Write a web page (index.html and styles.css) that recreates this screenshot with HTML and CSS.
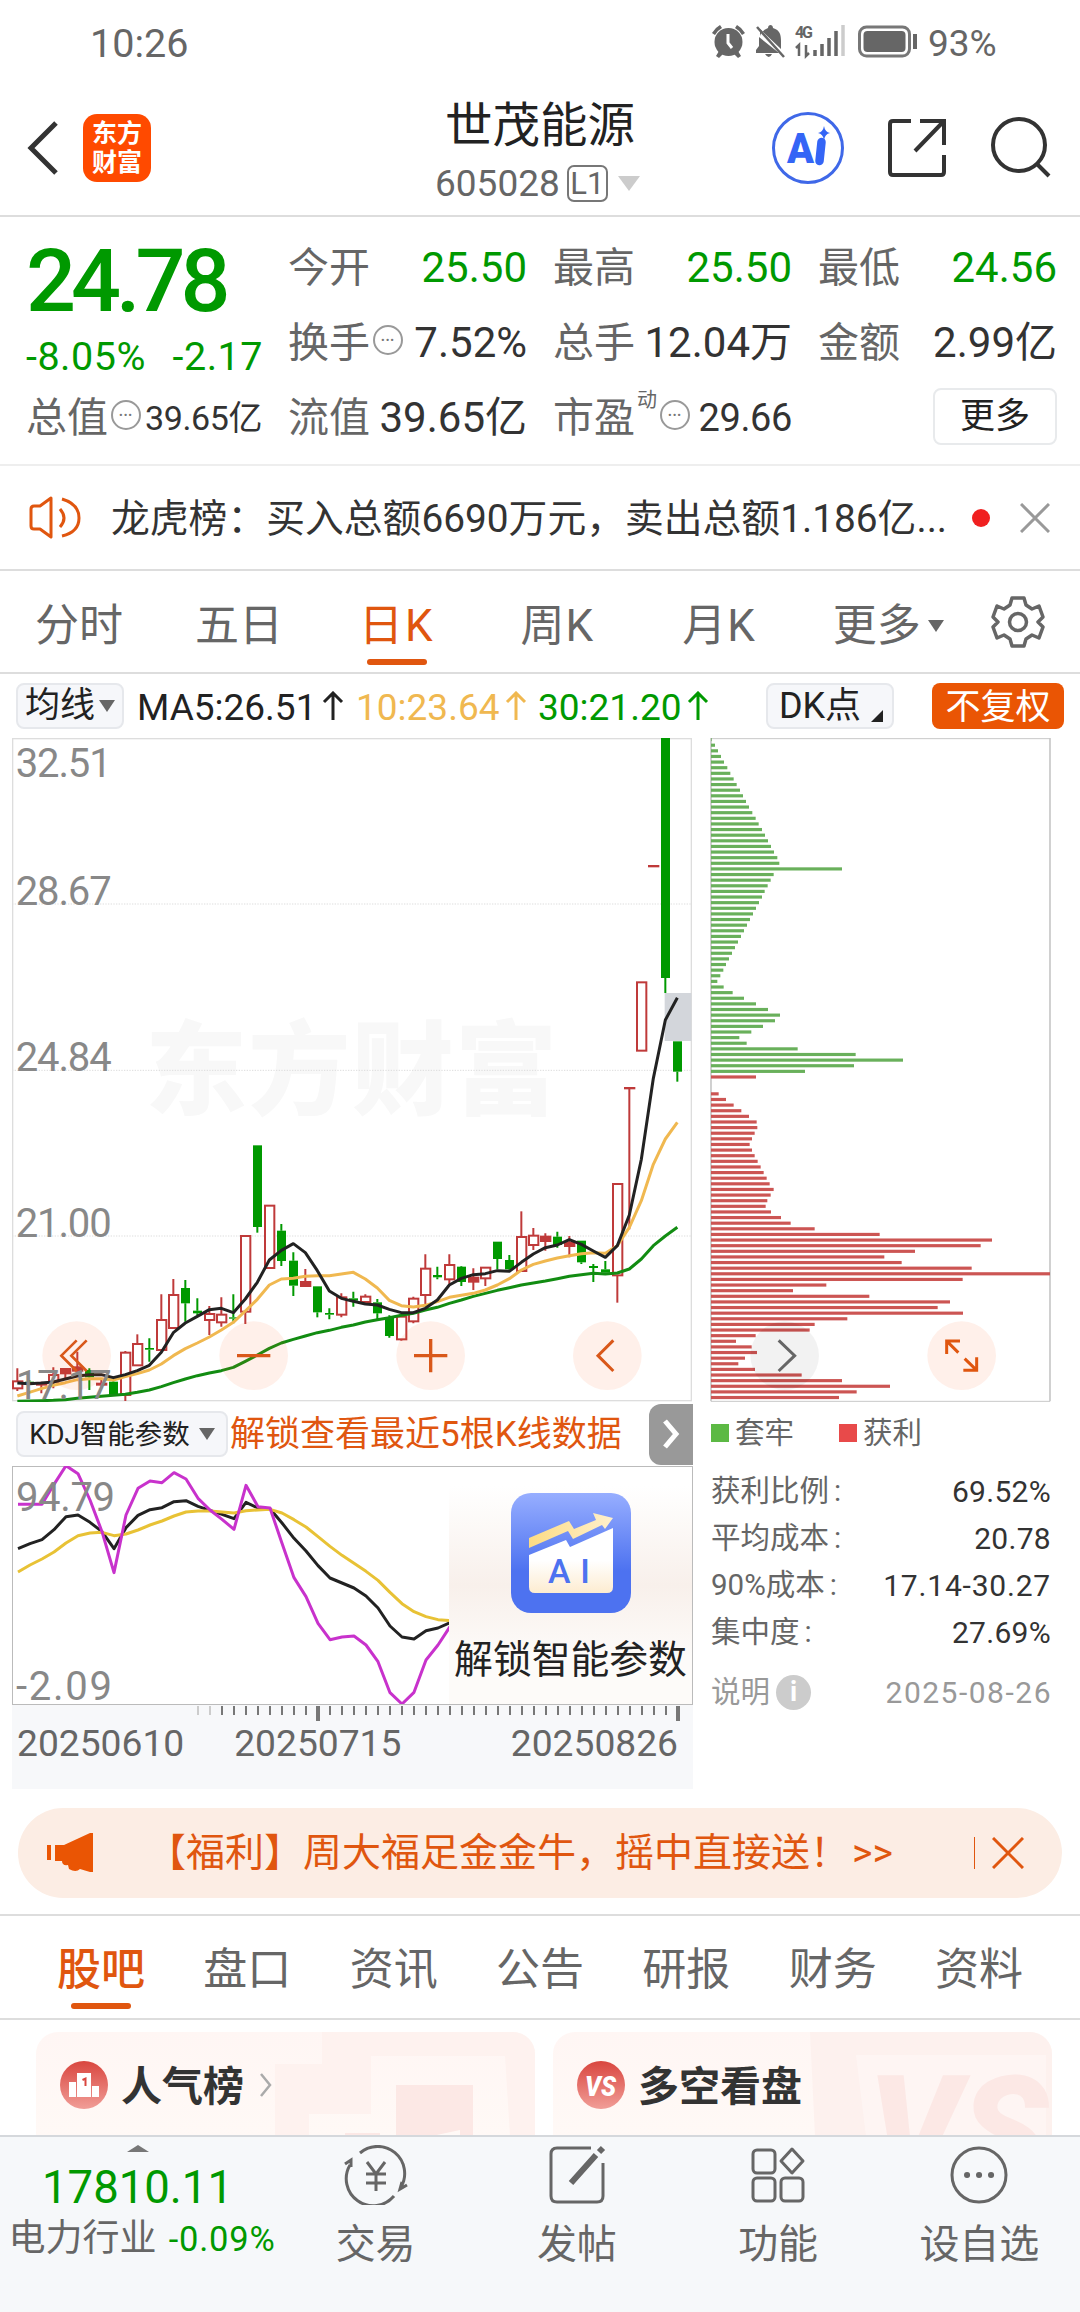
FILE: index.html
```html
<!DOCTYPE html>
<html lang="zh-CN">
<head>
    <meta charset="UTF-8">
    <meta name="viewport" content="width=device-width, initial-scale=1.0">
    <title>世茂能源 605028</title>
    <link rel="stylesheet" href="styles.css">
</head>
<body>
    <div class="status">
        <span class="clock">10:26</span>
        <svg class="status-icons" width="212" height="40" viewBox="708 20 212 40">
            <g fill="#666">
                <circle cx="728.5" cy="42" r="14"/>
                <path d="M712 33a20 20 0 0 1 8-8l2 3a18 18 0 0 0-7 7zM745 33a20 20 0 0 0-8-8l-2 3a18 18 0 0 1 7 7z"/>
                <path d="M719 51l4 3-4 4-3-2zM738 51l-4 3 4 4 3-2z"/>
                <path d="M760 36q2-6 8-8c0-4 5-4 5 0 7 2 8 7 8 13v8l-21-20zM759 37l20 16h-23v-3l3-4zM765 54h7q-3 6-7 0z"/>
            </g>
            <path d="M728 34v9l4 5" fill="none" stroke="#fff" stroke-width="3"/>
            <path d="M757 27l27 30" stroke="#666" stroke-width="2.5"/>
            <text class="net" x="795" y="38" textLength="18">4G</text>
            <path d="M799 56V45l-3 3M806 45v11l3-3" fill="none" stroke="#666" stroke-width="2.5"/>
            <path d="M815 56v-6M822 56V44M829 56V38M836 56V31" stroke="#666" stroke-width="3.5"/>
            <path d="M843 56V25" stroke="#ccc" stroke-width="3.5"/>
            <rect x="859.5" y="27" width="50" height="29" rx="7" fill="none" stroke="#777" stroke-width="3"/>
            <rect x="863.5" y="31" width="42" height="21" rx="4" fill="#666"/>
            <path d="M915 34v15" stroke="#666" stroke-width="4"/>
        </svg>
        <span class="percent">93%</span>
    </div>

    <div class="header">
        <svg class="back" width="32" height="56" viewBox="0 0 32 56"><path d="M29 3L4 28l25 25" fill="none" stroke="#333" stroke-width="5"/></svg>
        <div class="logo"><span>东方</span><span>财富</span></div>
        <div class="title">
            <h1>世茂能源</h1>
            <div class="code"><span>605028</span><span class="level">L1</span><i class="down"></i></div>
        </div>
        <svg class="ai-badge" width="74" height="74" viewBox="0 0 74 74">
            <circle cx="37" cy="37" r="34.5" fill="none" stroke="#3f68e8" stroke-width="3"/>
            <text x="16" y="52" textLength="27" lengthAdjust="spacingAndGlyphs">A</text>
            <path d="M50.500 31l-2 19" stroke="#3465f6" stroke-width="8.500" stroke-linecap="round"/>
            <path d="M53 15q1 6 6 7-5 1-6 7-1-6-6-7 5-1 6-7z" fill="#3465f6"/>
        </svg>
        <svg class="share" width="62" height="62" viewBox="0 0 62 62">
            <path d="M25 4H7q-3 0-3 3v48q0 3 3 3h48q3 0 3-3V38M34 4h24v24M58 4L29 34" fill="none" stroke="#333" stroke-width="4"/>
        </svg>
        <svg class="search" width="62" height="62" viewBox="0 0 62 62">
            <circle cx="30" cy="28" r="26" fill="none" stroke="#333" stroke-width="4"/>
            <path d="M48 47l12 12" stroke="#333" stroke-width="4"/>
        </svg>
    </div>

    <div class="quote">
        <div class="col first">
            <div class="price">24.78</div>
            <div class="change"><span>-8.05%</span><span>-2.17</span></div>
            <div class="item small"><label>总值</label><i class="tip">•••</i><b>39.65亿</b></div>
        </div>
        <div class="col">
            <div class="item green"><label>今开</label><b>25.50</b></div>
            <div class="item"><label>换手</label><i class="tip">•••</i><b>7.52%</b></div>
            <div class="item"><label>流值</label><b>39.65亿</b></div>
        </div>
        <div class="col">
            <div class="item green"><label>最高</label><b>25.50</b></div>
            <div class="item"><label>总手</label><b>12.04万</b></div>
            <div class="item pe"><label>市盈</label><sup>动</sup><i class="tip">•••</i><b>29.66</b></div>
        </div>
        <div class="col">
            <div class="item green"><label>最低</label><b>24.56</b></div>
            <div class="item"><label>金额</label><b>2.99亿</b></div>
            <button class="more">更多</button>
        </div>
    </div>

    <div class="notice">
        <svg width="52" height="46" viewBox="0 0 52 46" fill="none" stroke="#e0560f" stroke-width="3">
            <path d="M22 3L11 11H5q-3 0-3 3v17q0 3 3 3h6l11 8zM31 14q8 9 0 18M33 4q17 5 17 19T33 41" stroke-linejoin="round"/>
        </svg>
        <p>龙虎榜：买入总额6690万元，卖出总额1.186亿...</p>
        <i class="dot"></i>
        <svg width="30" height="30" viewBox="0 0 30 30"><path d="M1 1l28 28M29 1L1 29" stroke="#999" stroke-width="3"/></svg>
    </div>

    <div class="periods">
        <span>分时</span>
        <span>五日</span>
        <span class="on">日K</span>
        <span>周K</span>
        <span>月K</span>
        <span class="has-more">更多<i></i></span>
        <svg width="54" height="54" viewBox="-27 -27 54 54" fill="none" stroke="#666" stroke-width="3.500">
            <path d="M-6 -24H6L8 -17L14 -13L21 -16L25 -5L20 0L25 5L21 16L14 13L8 17L6 24H-6L-8 17L-14 13L-21 16L-25 5L-20 0L-25 -5L-21 -16L-14 -13L-8 -17Z" stroke-linejoin="round"/>
            <circle r="8.500"/>
        </svg>
    </div>

    <div class="ma-bar">
        <button class="pill avg">均线<i></i></button>
        <span class="ma5">MA5:26.51</span><svg class="up" viewBox="0 0 22 30"><path d="M11 29V2M2 11l9-9 9 9"/></svg>
        <span class="ma10">10:23.64</span><svg class="up c10" viewBox="0 0 22 30"><path d="M11 29V2M2 11l9-9 9 9"/></svg>
        <span class="ma30">30:21.20</span><svg class="up c30" viewBox="0 0 22 30"><path d="M11 29V2M2 11l9-9 9 9"/></svg>
        <button class="pill dk">DK点<i></i></button>
        <button class="adjust">不复权</button>
    </div>

    <div class="charts">
        <div class="left">
            <svg id="kline" width="680" height="664" viewBox="0 0 2040 1992"></svg>
            <div class="kdj-bar">
                <button class="pill kdj">KDJ智能参数<i></i></button>
                <span>解锁查看最近5根K线数据</span>
                <div class="next"><svg width="18" height="30" viewBox="0 0 18 30"><path d="M3 2l11 13L3 28" fill="none" stroke="#fff" stroke-width="5"/></svg></div>
            </div>
            <div class="kdj-panel">
                <svg id="kdj" width="437" height="238" viewBox="12 1466 437 238"></svg>
                <div class="unlock">
                    <svg width="120" height="120" viewBox="0 0 120 120">
                        <defs>
                            <linearGradient id="blue" x2="0" y2="1"><stop offset="0" stop-color="#97aeff"/><stop offset=".65" stop-color="#4d72f0"/></linearGradient>
                            <linearGradient id="gold" x2="1" y2="0"><stop offset="0" stop-color="#fddc84"/><stop offset="1" stop-color="#fff0cc"/></linearGradient>
                            <linearGradient id="cream" x2="0" y2="1"><stop offset=".5" stop-color="#fff"/><stop offset="1" stop-color="#fdecd0"/></linearGradient>
                        </defs>
                        <rect width="120" height="120" rx="20" fill="url(#blue)"/>
                        <path d="M18 62l37-15 4 7 43-19v59q0 6-6 6H24q-6 0-6-6z" fill="url(#cream)"/>
                        <path d="M18 45l40-17 5 8 22-9-3-7 20 5-8 11-3-4-29 14-5-8-39 17z" fill="url(#gold)"/>
                        <text x="37" y="90" textLength="42">AI</text>
                    </svg>
                    <p>解锁智能参数</p>
                </div>
            </div>
            <div class="axis">
                <svg id="ticks" width="680" height="16" viewBox="12 0 680 16"></svg>
                <div class="dates"><span>20250610</span><span>20250715</span><span>20250826</span></div>
            </div>
        </div>
        <div class="right">
            <svg id="chips" width="342" height="664" viewBox="0 0 1026 1992"></svg>
            <div class="legend"><i class="g"></i><span>套牢</span><i class="r"></i><span>获利</span></div>
            <div class="stat"><span>获利比例<u>:</u></span><b>69.52%</b></div>
            <div class="stat"><span>平均成本<u>:</u></span><b>20.78</b></div>
            <div class="stat"><span>90%成本<u>:</u></span><b class="range">17.14-30.27</b></div>
            <div class="stat"><span>集中度<u>:</u></span><b>27.69%</b></div>
            <div class="stat note"><span>说明</span><i>i</i><b>2025-08-26</b></div>
        </div>
    </div>

    <div class="promo">
        <svg width="46" height="40" viewBox="0 0 46 40" fill="#ea5504"><path d="M0 12h4v15H0zM8 12h9L43 0h3v39h-3l-10-3q-4 4-11 0l-1-4q-6 1-6-4H8z"/></svg>
        <p>【福利】周大福足金金牛，摇中直接送！<em>&gt;&gt;</em></p>
        <svg class="close" width="32" height="32" viewBox="0 0 32 32"><path d="M1 1l30 30M31 1L1 31" stroke="#e0560f" stroke-width="3"/></svg>
    </div>

    <div class="tabs">
        <span class="on">股吧</span>
        <span>盘口</span>
        <span>资讯</span>
        <span>公告</span>
        <span>研报</span>
        <span>财务</span>
        <span>资料</span>
    </div>

    <div class="cards">
        <div class="card rank">
            <svg width="48" height="48" viewBox="0 0 48 48">
                <defs><linearGradient id="red" x2="0" y2="1"><stop offset="0" stop-color="#d9463f"/><stop offset="1" stop-color="#f19d97"/></linearGradient></defs>
                <circle cx="24" cy="24" r="24" fill="url(#red)"/>
                <path d="M9 21h7v15H9zM17 12h14v24H17zM32 25h7v11h-7z" fill="#fff"/>
                <path d="M22.500 19l3-1.500V25" fill="none" stroke="#d9463f" stroke-width="2"/>
            </svg>
            <h2>人气榜</h2>
            <svg class="arrow" width="14" height="24" viewBox="0 0 14 24"><path d="M2 1l9 11-9 11" fill="none" stroke="#aaa" stroke-width="2.500"/></svg>
            <svg class="podium" width="260" height="104" viewBox="0 0 260 104"><path d="M0 32h47V0h213v104h-25l-5-80H96v58H34v22H0z" fill="#fef2ef"/><path d="M121 53h77v51h-13v-6l-28 6h-36zM70 101h35v3H70z" fill="#fce8e5"/></svg>
        </div>
        <div class="card versus">
            <svg width="48" height="48" viewBox="0 0 48 48"><circle cx="24" cy="24" r="24" fill="url(#red)"/><text x="8" y="35" textLength="31" lengthAdjust="spacingAndGlyphs">VS</text></svg>
            <h2>多空看盘</h2>
            <svg class="big-vs" width="242" height="104" viewBox="0 0 242 104"><path d="M0 0h242v104H5z" fill="#fdf1ee"/><path d="M46 23h190v81H56z" fill="#fef5f3"/><text x="58" y="150" textLength="180" lengthAdjust="spacingAndGlyphs">VS</text></svg>
        </div>
    </div>

    <div class="footer">
        <div class="index">
            <i class="tri"></i>
            <strong>17810.11</strong>
            <p><span>电力行业</span><em>-0.09%</em></p>
        </div>
        <div class="nav">
            <svg width="66" height="60" viewBox="-33 -30 66 60" fill="none" stroke="#666" stroke-width="3">
                <path d="M-16 -22A27 27 0 0 1 25 12M18 21A27 27 0 0 1 -26 -10M-31 -11l6 -4v7M31 10l-7 4 2 -7M-9 -13l9 12 9 -12M0 -1v17M-10 -1h20M-10 8h20"/>
            </svg>
            <span>交易</span>
        </div>
        <div class="nav">
            <svg width="66" height="60" viewBox="-33 -30 66 60" fill="none" stroke="#666" stroke-width="3">
                <path d="M14 -27H-20q-6 0-6 6v42q0 6 6 6H20q6 0 6-6V-12"/><path d="M19 -20L-6 8M26 -27l-4 4" stroke-width="6"/>
            </svg>
            <span>发帖</span>
        </div>
        <div class="nav">
            <svg width="66" height="60" viewBox="-33 -30 66 60" fill="none" stroke="#666" stroke-width="3">
                <rect x="-25" y="-25" width="22" height="23" rx="4"/><rect x="-25" y="3" width="22" height="23" rx="4"/><rect x="3" y="3" width="22" height="23" rx="4"/><path d="M14 -26l11 12-11 12L3 -14z" stroke-linejoin="round"/>
            </svg>
            <span>功能</span>
        </div>
        <div class="nav">
            <svg width="66" height="60" viewBox="-33 -30 66 60" fill="none" stroke="#666" stroke-width="3">
                <circle r="27"/><path d="M-12 0h.1M0 0h.1M12 0h.1" stroke-width="6" stroke-linecap="round"/>
            </svg>
            <span>设自选</span>
        </div>
    </div>
<script src="script.js"></script>
</body>
</html>
```

FILE: styles.css
```css
* {
    box-sizing: border-box;
}
body {
    margin: 0;
    width: 1080px;
    height: 2312px;
    overflow: hidden;
    background-color: #fff;
    color: #333;
    font-family: Roboto, "Noto Sans CJK SC", sans-serif;
    line-height: 1;
    display: flex;
    flex-direction: column;
}
h1, h2, p {
    margin: 0;
}
h1, b, em, i, strong {
    font-weight: 400;
    font-style: normal;
}
svg {
    display: block;
    flex: none;
}
button {
    font: inherit;
    color: #222;
    padding: 0;
    border: none;
    white-space: nowrap;
}

/* status bar */
.status {
    height: 88px;
    padding: 20px 84px 0 90px;
    display: flex;
    color: #666;
}
.clock {
    font-size: 39.500px;
    line-height: 48px;
}
.status-icons {
    margin-left: auto;
}
.percent {
    width: 68px;
    margin-left: 8px;
    font-size: 37px;
    line-height: 48px;
}
.net {
    font-size: 16px;
    font-weight: 700;
    fill: #666;
}

/* header */
.header {
    height: 129px;
    padding: 0 28px 0 27px;
    display: flex;
    align-items: flex-start;
    border-bottom: 2px solid #ddd;
}
.back {
    margin-top: 32px;
}
.logo {
    width: 68px;
    height: 68px;
    margin: 26px 0 0 24px;
    border-radius: 14px;
    background-color: #ff4a00;
    color: #fff;
    font-size: 25px;
    font-weight: 700;
    display: flex;
    flex-direction: column;
    align-items: center;
    justify-content: center;
    gap: 4px;
}
.title {
    width: 210px;
    margin: 12px 0 0 284px;
}
h1 {
    font-size: 47.500px;
    line-height: 52px;
    margin-left: 10px;
    color: #222;
    white-space: nowrap;
}
.code {
    height: 37px;
    margin-top: 13px;
    display: flex;
    align-items: center;
    font-size: 37px;
    color: #666;
}
.level {
    width: 41px;
    height: 37px;
    margin-left: 7px;
    border: 2px solid #777;
    border-radius: 7px;
    font-size: 31px;
    line-height: 34px;
    text-align: center;
}
.down {
    margin-left: 10px;
    border: 11px solid transparent;
    border-top: 15px solid #ccc;
    border-bottom: 0;
}
.ai-badge {
    margin: 23px 0 0 126px;
}
.ai-badge text {
    font-size: 43px;
    font-weight: 900;
    fill: #3465f6;
}
.share {
    margin: 29px 0 0 41px;
}
.search {
    margin: 29px 0 0 41px;
}

/* quote */
.quote {
    height: 249px;
    padding: 14px 23px 0 26px;
    display: grid;
    grid-template-columns: 236px 239px 239px 239px;
    column-gap: 26px;
    border-bottom: 2px solid #eee;
}
.col {
    display: flex;
    flex-direction: column;
}
.item {
    height: 75px;
    display: flex;
    align-items: center;
    font-size: 42px;
    white-space: nowrap;
}
.item label {
    font-size: 41px;
    color: #666;
}
.item b {
    margin-left: auto;
}
.item sup {
    align-self: flex-start;
    margin: 9px 0 0 2px;
    font-size: 20px;
    line-height: 20px;
    color: #666;
}
.green b, .price, .change {
    color: #009900;
}
.small b {
    font-size: 34px;
    letter-spacing: -0.4px;
}
.pe b {
    font-size: 38px;
    letter-spacing: -0.4px;
}
.price {
    height: 102px;
    font-size: 88px;
    font-weight: 500;
    line-height: 99px;
    letter-spacing: -5px;
}
.change {
    height: 48px;
    margin-right: -1px;
    display: flex;
    justify-content: space-between;
    font-size: 39.500px;
    line-height: 47px;
    letter-spacing: 0.5px;
}
.tip {
    width: 30px;
    height: 30px;
    margin: -7px 0 0 3px;
    border: 2px solid #999;
    border-radius: 50%;
    font-size: 11px;
    line-height: 27px;
    letter-spacing: 1px;
    text-align: center;
    color: #777;
}
.more {
    width: 124px;
    height: 57px;
    margin: 7px 0 0 auto;
    border: 2px solid #e8eaec;
    border-radius: 8px;
    background-color: #fff;
    font-size: 35px;
}

/* notice */
.notice {
    height: 105px;
    padding: 1px 30px 0 29px;
    display: flex;
    align-items: center;
    border-bottom: 2px solid #ddd;
}
.notice p {
    width: 840px;
    margin-left: 30px;
    font-size: 38.800px;
    line-height: 54px;
    padding-top: 3px;
    white-space: nowrap;
}
.dot {
    width: 18px;
    height: 18px;
    margin-left: 21px;
    border-radius: 50%;
    background-color: #f02020;
}
.dot + svg {
    margin-left: auto;
}

/* periods */
.periods {
    height: 104px;
    padding: 9px 35px 0;
    display: flex;
    align-items: center;
    border-bottom: 2px solid #ddd;
    font-size: 44px;
    color: #666;
}
.periods span {
    position: relative;
    margin-right: 72px;
    line-height: 60px;
}
.periods .on {
    margin-right: 86px;
    margin-left: 4px;
    letter-spacing: 2px;
}
.periods .on + span, .periods .on + span + span {
    margin-right: 88px;
    letter-spacing: 1px;
}
.on {
    color: #e0560f;
}
.periods .on::after, .tabs .on::after {
    content: "";
    position: absolute;
    left: 50%;
    bottom: -9px;
    width: 60px;
    height: 6px;
    margin-left: -30px;
    border-radius: 3px;
    background-color: #e0560f;
}
.periods .has-more {
    margin: 0 auto 0 -11px;
    display: flex;
    align-items: center;
}
.periods svg {
    margin-top: -7px;
}
.has-more i, .pill i {
    margin-left: 7px;
    border: 8px solid transparent;
    border-top: 12px solid #666;
    border-bottom: 0;
}

/* moving averages */
.ma-bar {
    height: 63px;
    padding: 9px 16px 0;
    display: flex;
    align-items: flex-start;
    font-size: 37px;
    line-height: 50px;
}
.pill {
    height: 46px;
    display: flex;
    align-items: center;
    justify-content: center;
    border: 2px solid #e6e8ec;
    border-radius: 8px;
    background-color: #f6f7fa;
}
.avg {
    width: 108px;
    font-size: 35px;
}
.avg i {
    margin-left: 4px;
}
.ma5 {
    width: 176px;
    margin-left: 13px;
    color: #222;
}
.ma10 {
    width: 145px;
    margin-left: 12px;
    color: #f0b850;
}
.ma30 {
    width: 145px;
    margin-left: 12px;
    color: #009900;
}
.up {
    width: 22px;
    height: 30px;
    margin: 8px 0 0 9px;
    fill: none;
    stroke: #222;
    stroke-width: 3;
}
.up.c10, .up.c30 {
    margin-left: 4px;
}
.up.c10 {
    margin-right: -1px;
}
.c10 {
    stroke: #f0b850;
}
.c30 {
    stroke: #009900;
}
.dk {
    width: 128px;
    margin-left: auto;
    padding-left: 2px;
    font-size: 36px;
}
.dk i {
    align-self: flex-end;
    margin: 0 0 5px 10px;
    border: 6px solid #222;
    border-left-color: transparent;
    border-top-color: transparent;
}
.adjust {
    width: 132px;
    height: 46px;
    margin-left: 38px;
    border-radius: 8px;
    background-color: #ea5504;
    color: #fff;
    font-size: 35px;
}

/* charts */
.charts {
    height: 1053px;
    margin-top: 1px;
    padding-left: 12px;
    display: flex;
    gap: 18px;
}
.left {
    width: 681px;
    margin-right: -1px;
}
.kdj-bar {
    height: 64px;
    display: flex;
    align-items: center;
}
.kdj {
    width: 212px;
    margin-left: 4px;
    font-size: 27.500px;
}
.kdj i {
    margin-left: 9px;
}
.kdj-bar span {
    margin-left: 2px;
    font-size: 35px;
    color: #e0560f;
    white-space: nowrap;
}
.next {
    width: 44px;
    height: 61px;
    margin-left: auto;
    border-radius: 12px 0 0 12px;
    background-color: #999;
    display: flex;
    align-items: center;
    justify-content: center;
}
.kdj-panel {
    height: 239px;
    border: 1px solid #bbb;
    display: flex;
}
#kdj {
    margin: -1px 0 0 -1px;
}
.unlock {
    width: 243px;
    display: flex;
    flex-direction: column;
    align-items: center;
    background: linear-gradient(#fff 8%, #f8f0eb 50%, #fdfbf9 80%);
}
.unlock svg {
    margin: 26px 0 28px;
}
.unlock svg text {
    font-size: 34px;
    font-weight: 500;
    fill: #4d72f0;
}
.unlock p {
    font-size: 38.800px;
    color: #222;
    white-space: nowrap;
}
.axis {
    height: 84px;
    background-color: #f7f8fa;
}
.dates {
    padding: 1px 15px 0 5px;
    display: flex;
    font-size: 37.200px;
    line-height: 42px;
    color: #666;
}
.dates span:nth-child(2) {
    margin: 0 auto 0 50px;
}
.tag {
    font-size: 40px;
    fill: #888;
}
#kline .tag {
    font-size: 120px;
}
.watermark {
    font-size: 306px;
    font-weight: 900;
    fill: #f8f8f8;
}
.right {
    width: 341px;
    font-size: 29.500px;
    color: #666;
}
.legend {
    height: 60px;
    margin-bottom: 6px;
    padding: 2px 0 0 1px;
    display: flex;
    align-items: center;
}
.legend i {
    width: 18px;
    height: 18px;
    margin-right: 6px;
}
.legend .g {
    background-color: #5cb944;
}
.legend .r {
    margin-left: 45px;
    background-color: #e84a4a;
}
.stat {
    height: 47px;
    padding-left: 1px;
    display: flex;
    align-items: center;
}
.stat u {
    margin-left: 5px;
    text-decoration: none;
}
.stat b {
    margin-left: auto;
    font-size: 30px;
    letter-spacing: 0.3px;
    color: #333;
}
.stat .range {
    letter-spacing: 0.8px;
}
.note {
    margin-top: 13px;
}
.note, .note b {
    color: #999;
}
.note b {
    letter-spacing: 1.5px;
    margin-right: -1px;
}
.note i {
    width: 35px;
    height: 35px;
    margin-left: 6px;
    border-radius: 50%;
    background-color: #ccc;
    color: #fff;
    font-weight: 700;
    font-size: 27px;
    line-height: 35px;
    text-align: center;
}

/* promo */
.promo {
    height: 90px;
    margin: 18px 18px 16px;
    padding: 0 38px 0 29px;
    display: flex;
    align-items: center;
    border-radius: 45px;
    background-color: #fcede4;
    color: #e0560f;
}
.promo p {
    margin-left: 54px;
    font-size: 39px;
    line-height: 52px;
    white-space: nowrap;
}
.promo em {
    margin-left: 3px;
}
.close {
    box-sizing: content-box;
    margin-left: auto;
    padding-left: 17px;
    border-left: 1px solid #e0560f;
}

/* tabs */
.tabs {
    height: 106px;
    padding: 6px 57px 0;
    display: flex;
    justify-content: space-between;
    align-items: center;
    border-top: 2px solid #ddd;
    border-bottom: 2px solid #ddd;
    font-size: 44px;
    color: #666;
}
.tabs span {
    position: relative;
    line-height: 64px;
}
.tabs .on {
    font-weight: 500;
}
.tabs .on::after {
    bottom: -7px;
}

/* cards */
.cards {
    height: 115px;
    padding: 12px 28px 0 36px;
    display: flex;
    gap: 18px;
}
.card {
    position: relative;
    width: 499px;
    height: 103px;
    padding: 3px 0 0 24px;
    display: flex;
    align-items: center;
    border-radius: 22px 22px 0 0;
    background: linear-gradient(#fff6f4, #fff9f6);
    overflow: hidden;
}
.card > svg {
    position: relative;
    z-index: 1;
}
.card h2 {
    position: relative;
    z-index: 1;
    margin-left: 13px;
    font-size: 41px;
    font-weight: 700;
    line-height: 60px;
    padding-top: 3px;
}
.card .arrow {
    margin-left: 15px;
}
.card .podium, .card .big-vs {
    position: absolute;
    top: 0;
    right: 0;
    z-index: 0;
}
.versus svg text {
    font-size: 27px;
    font-style: italic;
    font-weight: 900;
    fill: #fff;
}
.versus .big-vs text {
    font-size: 150px;
    fill: #fce8e5;
}

/* footer */
.footer {
    height: 177px;
    display: flex;
    border-top: 2px solid #d5d8dc;
    background-color: #f6f8fa;
    color: #666;
}
.index {
    width: 275px;
    padding-top: 8px;
    display: flex;
    flex-direction: column;
    align-items: center;
}
.tri {
    border: 11px solid transparent;
    border-top: 0;
    border-bottom: 7px solid #777;
}
.index strong {
    margin-top: 10px;
    font-size: 45.500px;
    line-height: 52px;
    color: #009900;
}
.index p {
    width: 276px;
    padding-left: 9px;
    display: flex;
    align-items: center;
    justify-content: space-between;
    font-size: 37px;
    line-height: 50px;
    white-space: nowrap;
}
.index em {
    font-size: 34.500px;
    letter-spacing: 0.8px;
    color: #009900;
}
.nav {
    width: 201.500px;
    padding-top: 8px;
    display: flex;
    flex-direction: column;
    align-items: center;
    font-size: 40px;
    line-height: 50px;
}
.nav span {
    margin-top: 15px;
}
```

FILE: script.js
```js
const NS = "http://www.w3.org/2000/svg";
const GREEN = "#009900";
const RED = "#bf3a3a";

function add(parent, name, attrs, text) {
    const el = document.createElementNS(NS, name);
    for (const key in attrs) el.setAttribute(key, attrs[key]);
    if (text) el.textContent = text;
    parent.appendChild(el);
    return el;
}

function line(svg, values, x0, step, toY, color, width) {
    const points = values.map((v, i) => `${x0 + i * step},${toY(v)}`).join(" ");
    add(svg, "polyline", { points, fill: "none", stroke: color, "stroke-width": width, "stroke-linejoin": "round" });
}

// ---- candles: [up, body top, body bottom, high, low], measured from BASE ----
const BASE = 1026;
const candles = [
    [1, 904, 925, 865, 933], [0, 905, 909, 900, 912], [1, 911, 914, 905, 940], [1, 885, 905, 862, 925],
    [1, 867, 880, 865, 900], [1, 862, 872, 815, 880], [0, 870, 892, 865, 930], [1, 911, 914, 900, 925],
    [0, 905, 948, 900, 948], [1, 818, 945, 813, 963], [1, 792, 856, 763, 856], [0, 804, 809, 775, 845],
    [1, 720, 810, 643, 815], [1, 645, 744, 597, 744], [0, 624, 670, 600, 725], [0, 692, 700, 655, 705],
    [1, 702, 720, 678, 765], [1, 704, 727, 652, 740], [0, 712, 716, 643, 730], [1, 468, 695, 468, 732],
    [0, 196, 441, 196, 458], [1, 377, 564, 377, 564], [0, 452, 543, 432, 558], [0, 542, 617, 517, 648],
    [1, 606, 618, 567, 618], [0, 619, 697, 619, 712], [0, 699, 704, 685, 718], [1, 652, 704, 640, 712],
    [0, 655, 662, 635, 680], [1, 650, 666, 643, 670], [0, 667, 700, 657, 720], [0, 712, 768, 706, 773],
    [1, 710, 778, 710, 782], [1, 656, 724, 650, 730], [1, 566, 645, 523, 675], [0, 585, 592, 560, 598],
    [1, 555, 598, 523, 612], [0, 560, 606, 558, 618], [1, 593, 605, 565, 630], [1, 563, 595, 563, 618],
    [0, 485, 537, 485, 568], [0, 540, 568, 525, 572], [1, 471, 573, 394, 573], [1, 467, 495, 444, 510],
    [1, 470, 483, 460, 512], [0, 470, 495, 455, 503], [1, 488, 498, 468, 532], [0, 482, 547, 482, 552],
    [0, 558, 564, 552, 606], [0, 568, 578, 543, 585], [1, 312, 586, 312, 668], [1, 24, 25, 24, 448],
    [1, -293, -88, -293, -88], [1, -642, -641, -642, -641], [0, -1026, -306, -1026, -261], [0, -116, -25, -116, 5]
];
const ma5 = [909, 911, 909, 906, 897, 888, 884, 884, 893, 884, 872, 856, 817, 758, 729, 709, 689, 685, 698, 657,
    607, 540, 511, 491, 518, 572, 633, 655, 664, 672, 675, 688, 698, 698, 685, 660, 615, 595, 584, 581,
    572, 574, 547, 522, 503, 495, 479, 493, 513, 532, 497, 405, 238, -5, -180, -247];
const ma10 = [948, 937, 926, 916, 908, 899, 896, 896, 900, 890, 881, 870, 852, 827, 806, 789, 771, 750, 727, 693,
    658, 615, 597, 595, 589, 587, 587, 582, 577, 597, 624, 661, 677, 681, 676, 665, 652, 646, 640, 630,
    615, 596, 570, 553, 543, 534, 527, 521, 518, 520, 497, 442, 362, 253, 177, 127];
const ma30 = [964, 963, 962, 961, 959, 955, 952, 949, 946, 943, 937, 930, 920, 908, 897, 887, 879, 872, 862, 844,
    825, 805, 789, 778, 768, 758, 751, 742, 735, 726, 719, 713, 706, 700, 690, 682, 670, 660, 649, 640,
    631, 623, 615, 609, 603, 596, 589, 584, 580, 582, 579, 567, 537, 497, 468, 442];

function roundButton(svg, cx, cy, icon, tint, color, width) {
    add(svg, "circle", { cx, cy, r: 103, fill: tint });
    add(svg, "path", { d: icon, transform: `translate(${cx},${cy})`, fill: "none", stroke: color, "stroke-width": width || 8 });
}

function drawKline() {
    const svg = document.getElementById("kline");
    add(svg, "text", { x: 399, y: 1107, textLength: 1236, class: "watermark" }, "东方财富");
    [498, 997, 1494].forEach(y => add(svg, "path", { d: `M0 ${y}H2040`, stroke: "#ddd", "stroke-width": 3, "stroke-dasharray": "4 4" }));
    add(svg, "rect", { x: 2, y: 2, width: 2036, height: 1986, fill: "none", stroke: "#ddd", "stroke-width": 4 });
    add(svg, "rect", { x: 1958, y: 765, width: 80, height: 144, fill: "#d3d6db" });

    candles.forEach(([up, top, bottom, high, low], i) => {
        const x = 16 + i * 36;
        const color = up ? RED : GREEN;
        add(svg, "path", { d: `M${x} ${BASE + high}V${BASE + top}M${x} ${BASE + bottom}V${BASE + low}`, stroke: color, "stroke-width": 6 });
        if (up) {
            add(svg, "rect", { x: x - 13, y: BASE + top, width: 28, height: bottom - top, fill: bottom - top < 15 ? color : "#fff", stroke: color, "stroke-width": 6 });
        } else {
            add(svg, "rect", { x: x - 13, y: BASE + top, width: 27, height: bottom - top, fill: color });
        }
    });

    line(svg, ma30, 16, 36, v => BASE + v, "#128c12", 9);
    line(svg, ma10, 16, 36, v => BASE + v, "#f0b850", 9);
    line(svg, ma5, 16, 36, v => BASE + v, "#222", 9);

    const tint = "rgba(255, 90, 20, 0.09)";
    roundButton(svg, 194, 1853, "M0 -46l-46 46 46 46M30 -46l-46 46 46 46", tint, "#d9581a");
    roundButton(svg, 725, 1853, "M-50 0h100", tint, "#d9581a", 10);
    roundButton(svg, 1256, 1853, "M-50 0h100M0 -50v100", tint, "#d9581a", 10);
    roundButton(svg, 1786, 1853, "M18 -46l-46 46 46 46", tint, "#d9581a", 9);

    [["32.51", 118], ["28.67", 502], ["24.84", 1000], ["21.00", 1497], ["17.17", 1982]].forEach(([t, y]) =>
        add(svg, "text", { x: 11, y, textLength: 288, class: "tag" }, t));
}

// ---- chip distribution, one bar per price level ----
const chips = [2, 12, 21, 30, 39, 49, 58, 68, 77, 87, 96, 105, 114, 124, 134, 143, 153, 162, 171, 180, 189, 199, 205, 393,
    188, 179, 170, 161, 153, 144, 135, 126, 117, 108, 99, 90, 81, 72, 63, 54, 45, 37, 28, 19, 38, 65, 99, 135, 171, 207,
    192, 156, 121, 85, 107, 260, 434, 576, 429, 282, 135, 0, 0, 23, 45, 68, 91, 114, 137, 139, 131, 123, 116, 123, 131,
    140, 149, 158, 167, 176, 188, 179, 169, 164, 180, 210, 239, 311, 506, 843, 809, 612, 520, 572, 782, 1017, 755, 346,
    246, 475, 717, 680, 756, 409, 311, 296, 134, 75, 122, 138, 102, 82, 132, 272, 393, 537, 437, 384];

function drawChips() {
    const svg = document.getElementById("chips");
    add(svg, "path", { d: "M3 2H1020M3 1990H1020", stroke: "#c8c8c8", "stroke-width": 3 });
    add(svg, "path", { d: "M3 0V1990M1020 0V1990", stroke: "#c8c8c8", "stroke-width": 5 });
    chips.forEach((w, i) => add(svg, "rect", { x: 3, y: i * 16.87, width: w, height: 9.5, fill: i < 60 ? "#69b05b" : "#cc5553" }));
    roundButton(svg, 224, 1853, "M-18 -46l48 46 -48 46", "rgba(0, 0, 0, 0.05)", "#666", 9);
    roundButton(svg, 755, 1853, "M-45 -5V-44H-5M-43 -42L-10 -9M45 5V44H5M43 42L9 9", "rgba(255, 90, 20, 0.09)", "#e0560f", 9);
}

// ---- KDJ ----
const k = [446, 431, 419, 389, 350, 345, 367, 395, 446, 383, 346, 329, 323, 305, 302, 319, 331, 343, 356, 307, 324, 326,
    369, 415, 453, 497, 534, 549, 564, 588, 624, 678, 711, 717, 692, 684, 668];
const d = [516, 495, 477, 456, 429, 407, 399, 397, 407, 402, 390, 375, 363, 348, 336, 333, 333, 336, 339, 332, 330, 328,
    339, 359, 381, 410, 439, 466, 490, 514, 541, 577, 611, 635, 650, 659, 662];
const j = [313, 313, 313, 253, 197, 221, 300, 395, 518, 345, 265, 243, 248, 218, 237, 295, 330, 358, 388, 256, 320, 324,
    430, 533, 590, 670, 719, 711, 708, 735, 785, 878, 912, 877, 780, 735, 680];

function drawKdj() {
    const svg = document.getElementById("kdj");
    const toY = v => 1400 + v / 3;
    line(svg, k, 18, 12, toY, "#222", 3);
    line(svg, d, 18, 12, toY, "#e8c235", 3);
    line(svg, j, 18, 12, toY, "#c832cc", 3);
    add(svg, "text", { x: 16, y: 1511, textLength: 99, class: "tag" }, "94.79");
    add(svg, "text", { x: 16, y: 1700, textLength: 96, class: "tag" }, "-2.09");
}

function drawTicks() {
    const svg = document.getElementById("ticks");
    for (let x = 198; x <= 678; x += 12) {
        const major = x === 318 || x === 678;
        add(svg, "path", { d: `M${x} 1V${major ? 16 : 10}`, stroke: x < 220 ? "#ccc" : "#777", "stroke-width": major ? 4 : 2 });
    }
}

drawKline();
drawChips();
drawKdj();
drawTicks();
```
